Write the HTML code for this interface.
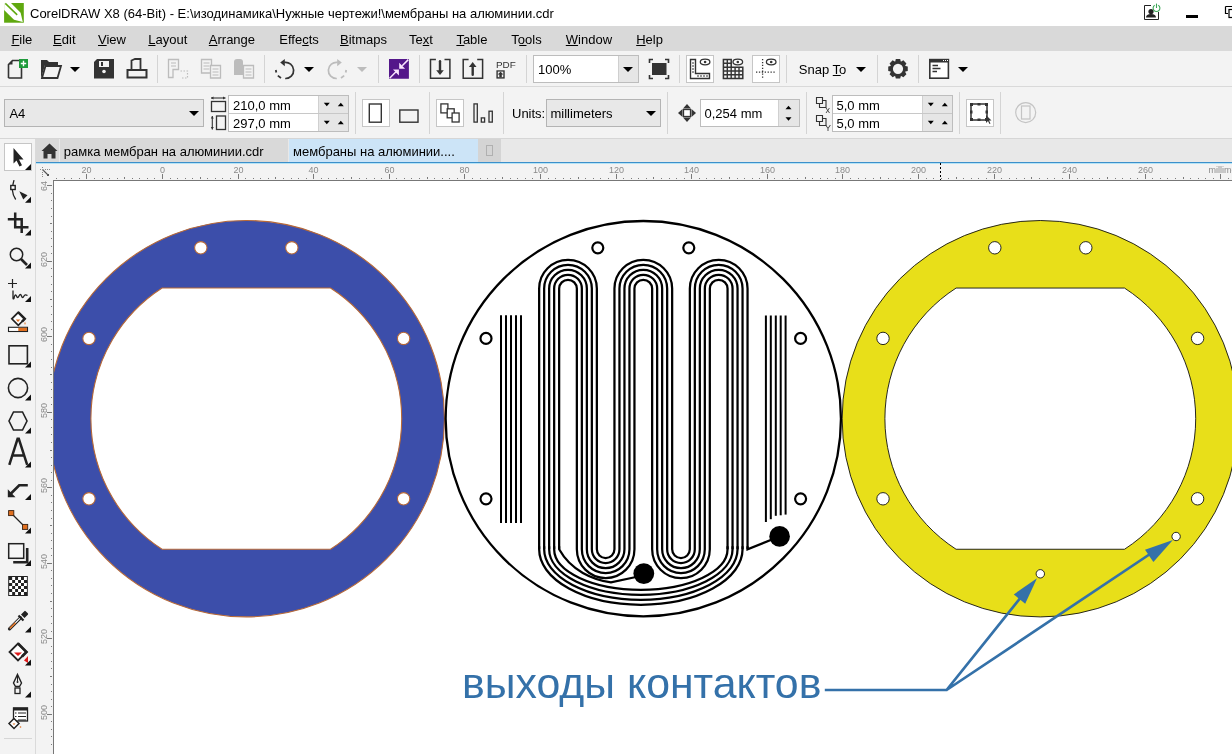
<!DOCTYPE html>
<html><head><meta charset="utf-8">
<style>
html,body{margin:0;padding:0;width:1232px;height:754px;overflow:hidden;background:#f3f3f3;font-family:"Liberation Sans", sans-serif;font-size:13px;color:#000}
body{position:relative}
.a{position:absolute}
svg text{font-family:"Liberation Sans",sans-serif}
svg{will-change:transform}
</style></head><body>
<div class="a" style="left:0px;top:0px;width:1232px;height:26px;background:#ffffff;"></div><div class="a" style="left:0px;top:26px;width:1232px;height:25px;background:#d9d9d9;"></div><div class="a" style="left:0px;top:51px;width:1232px;height:35px;background:#f3f3f3;"></div><div class="a" style="left:0px;top:86px;width:1232px;height:1px;background:#d9d9d9;"></div><div class="a" style="left:0px;top:87px;width:1232px;height:51px;background:#f3f3f3;"></div><div class="a" style="left:0px;top:138px;width:1232px;height:1px;background:#d6d6d6;"></div><div class="a" style="left:36px;top:139px;width:1196px;height:23px;background:#e8e8e8;"></div><div class="a" style="left:36px;top:139px;width:23px;height:23px;background:#d9d9d9;"></div><div class="a" style="left:60px;top:139px;width:228px;height:23px;background:#d9d9d9;"></div><div class="a" style="left:289px;top:139px;width:189px;height:23px;background:#cce4f7;"></div><div class="a" style="left:478px;top:139px;width:23px;height:23px;background:#d4d4d4;"></div><div class="a" style="left:36px;top:162px;width:1196px;height:1px;background:#3b8fca;"></div><div class="a" style="left:36px;top:163px;width:1196px;height:1px;background:#b5e3f6;"></div><div class="a" style="left:36px;top:164px;width:1196px;height:16px;background:#f3f3f3;"></div><div class="a" style="left:36px;top:164px;width:17px;height:590px;background:#f3f3f3;"></div><div class="a" style="left:53px;top:180px;width:1179px;height:574px;background:#fff;border-left:1px solid #777;border-top:1px solid #777;box-sizing:border-box"></div><div class="a" style="left:0px;top:139px;width:35px;height:615px;background:#f3f3f3;"></div><div class="a" style="left:35px;top:139px;width:1px;height:615px;background:#dadada;"></div><div class="a" style="left:533px;top:55px;width:106px;height:28px;background:#fff;border:1px solid #bdbdbd;box-sizing:border-box"></div><div class="a" style="left:618px;top:56px;width:19px;height:26px;background:#e6e6e6;border-left:1px solid #cfcfcf"></div><div class="a" style="left:686px;top:55px;width:28px;height:28px;background:#fff;border:1px solid #c6c6c6;box-sizing:border-box"></div><div class="a" style="left:752px;top:55px;width:28px;height:28px;background:#fff;border:1px solid #c6c6c6;box-sizing:border-box"></div><div class="a" style="left:4px;top:99px;width:200px;height:28px;background:#e8e8e8;border:1px solid #b4b4b4;box-sizing:border-box"></div><div class="a" style="left:228px;top:95px;width:121px;height:37px;background:#fff;border:1px solid #bdbdbd;box-sizing:border-box"></div><div class="a" style="left:318px;top:96px;width:29px;height:35px;background:#e6e6e6;border-left:1px solid #d0d0d0"></div><div class="a" style="left:229px;top:113px;width:119px;height:1px;background:#c8c8c8;"></div><div class="a" style="left:362px;top:99px;width:28px;height:28px;background:#fff;border:1px solid #c6c6c6;box-sizing:border-box"></div><div class="a" style="left:436px;top:99px;width:28px;height:28px;background:#fff;border:1px solid #c6c6c6;box-sizing:border-box"></div><div class="a" style="left:546px;top:99px;width:115px;height:28px;background:#e8e8e8;border:1px solid #b4b4b4;box-sizing:border-box"></div><div class="a" style="left:700px;top:99px;width:100px;height:28px;background:#fff;border:1px solid #bdbdbd;box-sizing:border-box"></div><div class="a" style="left:778px;top:100px;width:20px;height:26px;background:#e6e6e6;border-left:1px solid #d0d0d0"></div><div class="a" style="left:832px;top:95px;width:121px;height:37px;background:#fff;border:1px solid #bdbdbd;box-sizing:border-box"></div><div class="a" style="left:922px;top:96px;width:29px;height:35px;background:#e6e6e6;border-left:1px solid #d0d0d0"></div><div class="a" style="left:833px;top:113px;width:119px;height:1px;background:#c8c8c8;"></div><div class="a" style="left:966px;top:99px;width:28px;height:28px;background:#fff;border:1px solid #c6c6c6;box-sizing:border-box"></div><div class="a" style="left:4px;top:143px;width:28px;height:28px;background:#fff;border:1px solid #c6c6c6;box-sizing:border-box"></div>
<svg class="a" style="left:0;top:0" width="1232" height="754" viewBox="0 0 1232 754"><defs><clipPath id="cv"><rect x="54" y="181" width="1178" height="573"/></clipPath></defs><g clip-path="url(#cv)"><path d="M48.15,418.65a198.15,198.15 0 1,0 396.30,0a198.15,198.15 0 1,0 -396.30,0zM162.08,288.05L330.52,288.05A155.4,155.4 0 0,1 330.52,549.25L162.08,549.25A155.4,155.4 0 0,1 162.08,288.05zM194.60,247.80a6.2,6.2 0 1,0 12.40,0a6.2,6.2 0 1,0 -12.40,0zM285.60,247.80a6.2,6.2 0 1,0 12.40,0a6.2,6.2 0 1,0 -12.40,0zM82.80,338.40a6.2,6.2 0 1,0 12.40,0a6.2,6.2 0 1,0 -12.40,0zM397.40,338.40a6.2,6.2 0 1,0 12.40,0a6.2,6.2 0 1,0 -12.40,0zM82.80,498.80a6.2,6.2 0 1,0 12.40,0a6.2,6.2 0 1,0 -12.40,0zM397.40,498.80a6.2,6.2 0 1,0 12.40,0a6.2,6.2 0 1,0 -12.40,0z" fill="#3c4eaa" fill-rule="evenodd" stroke="#b86a38" stroke-width="1.1"/><path d="M842.15,418.65a198.15,198.15 0 1,0 396.30,0a198.15,198.15 0 1,0 -396.30,0zM956.08,288.05L1124.52,288.05A155.4,155.4 0 0,1 1124.52,549.25L956.08,549.25A155.4,155.4 0 0,1 956.08,288.05zM988.60,247.80a6.2,6.2 0 1,0 12.40,0a6.2,6.2 0 1,0 -12.40,0zM1079.60,247.80a6.2,6.2 0 1,0 12.40,0a6.2,6.2 0 1,0 -12.40,0zM876.80,338.40a6.2,6.2 0 1,0 12.40,0a6.2,6.2 0 1,0 -12.40,0zM1191.40,338.40a6.2,6.2 0 1,0 12.40,0a6.2,6.2 0 1,0 -12.40,0zM876.80,498.80a6.2,6.2 0 1,0 12.40,0a6.2,6.2 0 1,0 -12.40,0zM1191.40,498.80a6.2,6.2 0 1,0 12.40,0a6.2,6.2 0 1,0 -12.40,0zM1036.10,573.80a4.2,4.2 0 1,0 8.40,0a4.2,4.2 0 1,0 -8.40,0zM1171.90,536.50a4.2,4.2 0 1,0 8.40,0a4.2,4.2 0 1,0 -8.40,0z" fill="#e8df19" fill-rule="evenodd" stroke="#111" stroke-width="0.9"/><circle cx="643.3" cy="418.65" r="197.65" fill="none" stroke="#000" stroke-width="2.3"/><circle cx="597.80" cy="247.80" r="5.5" fill="none" stroke="#000" stroke-width="2.2"/><circle cx="688.80" cy="247.80" r="5.5" fill="none" stroke="#000" stroke-width="2.2"/><circle cx="486.00" cy="338.40" r="5.5" fill="none" stroke="#000" stroke-width="2.2"/><circle cx="800.60" cy="338.40" r="5.5" fill="none" stroke="#000" stroke-width="2.2"/><circle cx="486.00" cy="498.80" r="5.5" fill="none" stroke="#000" stroke-width="2.2"/><circle cx="800.60" cy="498.80" r="5.5" fill="none" stroke="#000" stroke-width="2.2"/><line x1="501" y1="315.3" x2="501" y2="523" stroke="#000" stroke-width="2"/><line x1="506" y1="315.3" x2="506" y2="523" stroke="#000" stroke-width="2"/><line x1="511" y1="315.3" x2="511" y2="523" stroke="#000" stroke-width="2"/><line x1="516" y1="315.3" x2="516" y2="523" stroke="#000" stroke-width="2"/><line x1="521" y1="315.3" x2="521" y2="523" stroke="#000" stroke-width="2"/><line x1="765.9" y1="315.5" x2="765.9" y2="522" stroke="#000" stroke-width="2"/><line x1="770.8" y1="315.5" x2="770.8" y2="519.2" stroke="#000" stroke-width="2"/><line x1="775.8" y1="315.5" x2="775.8" y2="515.8" stroke="#000" stroke-width="2"/><line x1="780.7" y1="315.5" x2="780.7" y2="515.3" stroke="#000" stroke-width="2"/><line x1="785.6" y1="315.5" x2="785.6" y2="514.6" stroke="#000" stroke-width="2"/><path d="M559.15,549.30L559.15,288.60A8.85,8.85 0 0,1 576.85,288.60L576.85,549.30A28.80,28.80 0 0,0 634.45,549.30L634.45,288.60A8.85,8.85 0 0,1 652.15,288.60L652.15,549.30A28.80,28.80 0 0,0 709.80,549.30L709.85,288.60A8.85,8.85 0 0,1 727.55,288.60L727.55,549.30" fill="none" stroke="#000" stroke-width="2.25"/><path d="M554.15,549.30L554.15,288.60A13.85,13.85 0 0,1 581.85,288.60L581.85,549.30A23.80,23.80 0 0,0 629.45,549.30L629.45,288.60A13.85,13.85 0 0,1 657.15,288.60L657.15,549.30A23.80,23.80 0 0,0 704.80,549.30L704.85,288.60A13.85,13.85 0 0,1 732.55,288.60L732.55,549.30" fill="none" stroke="#000" stroke-width="2.25"/><path d="M549.15,549.30L549.15,288.60A18.85,18.85 0 0,1 586.85,288.60L586.85,549.30A18.80,18.80 0 0,0 624.45,549.30L624.45,288.60A18.85,18.85 0 0,1 662.15,288.60L662.15,549.30A18.80,18.80 0 0,0 699.80,549.30L699.85,288.60A18.85,18.85 0 0,1 737.55,288.60L737.55,549.30" fill="none" stroke="#000" stroke-width="2.25"/><path d="M544.15,549.30L544.15,288.60A23.85,23.85 0 0,1 591.85,288.60L591.85,549.30A13.80,13.80 0 0,0 619.45,549.30L619.45,288.60A23.85,23.85 0 0,1 667.15,288.60L667.15,549.30A13.80,13.80 0 0,0 694.80,549.30L694.85,288.60A23.85,23.85 0 0,1 742.55,288.60L742.55,549.30" fill="none" stroke="#000" stroke-width="2.25"/><path d="M539.15,549.30L539.15,288.60A28.85,28.85 0 0,1 596.85,288.60L596.85,549.30A8.80,8.80 0 0,0 614.45,549.30L614.45,288.60A28.85,28.85 0 0,1 672.15,288.60L672.15,549.30A8.80,8.80 0 0,0 689.80,549.30L689.85,288.60A28.85,28.85 0 0,1 747.55,288.60L747.55,549.30" fill="none" stroke="#000" stroke-width="2.25"/><path d="M554.15,546.30L554.15,549.30A86.70,40.50 0 0,0 727.55,549.30L727.55,546.30" fill="none" stroke="#000" stroke-width="2.25"/><path d="M549.15,546.30L549.15,549.30A91.70,45.50 0 0,0 732.55,549.30L732.55,546.30" fill="none" stroke="#000" stroke-width="2.25"/><path d="M544.15,546.30L544.15,549.30A96.70,50.50 0 0,0 737.55,549.30L737.55,546.30" fill="none" stroke="#000" stroke-width="2.25"/><path d="M539.15,546.30L539.15,549.30A101.70,55.50 0 0,0 742.55,549.30L742.55,546.30" fill="none" stroke="#000" stroke-width="2.25"/><path d="M559.15,546.30L559.15,549.30C571.15,570.9 593,579.7 611,582.4L636,577" fill="none" stroke="#000" stroke-width="2.25"/><path d="M747.55,546.30L747.55,549.30L772,539.5" fill="none" stroke="#000" stroke-width="2.25"/><circle cx="643.8" cy="573.6" r="10.4" fill="#000"/><circle cx="779.6" cy="536.4" r="10.3" fill="#000"/><path d="M824.8,690L946.6,690L1030,586M946.6,690L1162,546" fill="none" stroke="#3471a9" stroke-width="2.7" stroke-linejoin="miter"/><path d="M1037,578.2L1013.8,594.4L1025.2,603.8z" fill="#3471a9"/><path d="M1172.9,540L1145,549.8L1153.4,562z" fill="#3471a9"/><text x="462" y="697.9" font-family="Liberation Sans" font-size="43" fill="#3471a9" textLength="359.4" lengthAdjust="spacingAndGlyphs">выходы контактов</text></g></svg>
<svg class="a" style="left:0;top:0" width="1232" height="754" viewBox="0 0 1232 754" font-family="Liberation Sans, sans-serif"><rect x="4.1" y="3" width="19.7" height="19.7" fill="#5fa80f"/><path d="M4.1,3 L11,3 L20.6,12.8 L22.8,21.9 L14,19.8 L4.1,9.9 Z" fill="#fff"/><path d="M5.3,3.4 L17.2,14.9" stroke="#5fa80f" stroke-width="1.5"/><text x="30" y="18" font-size="13" fill="#000" text-anchor="start" >CorelDRAW X8 (64-Bit) - E:\изодинамика\Нужные чертежи!\мембраны на алюминии.cdr</text><path d="M1144.5,19.5 L1144.5,5.5 L1151,5.5 M1158.5,12 L1158.5,19.5 L1144.5,19.5" fill="none" stroke="#222" stroke-width="1"/><circle cx="1151" cy="11.5" r="2.6" fill="#222"/><path d="M1146,17.5 Q1146,14 1151,14 Q1156,14 1156,17.5 Z" fill="#222"/><path d="M1158.3,5.2 A3.4,3.4 0 1,1 1154.7,5.2" fill="none" stroke="#3aa655" stroke-width="1.1"/><line x1="1156.5" y1="3.6" x2="1156.5" y2="8" stroke="#3aa655" stroke-width="1.1"/><rect x="1186" y="15" width="12" height="3" fill="#000"/><path d="M1225.5,6.5 L1232,6.5 M1225.5,6.5 L1225.5,13.5 L1228,13.5" fill="none" stroke="#000" stroke-width="1.2"/><rect x="1229" y="9.5" width="6" height="8" fill="none" stroke="#000" stroke-width="1.2"/><text x="11.4" y="44" font-size="13" fill="#000" text-anchor="start" >File</text><text x="53.1" y="44" font-size="13" fill="#000" text-anchor="start" >Edit</text><text x="98" y="44" font-size="13" fill="#000" text-anchor="start" >View</text><text x="148.3" y="44" font-size="13" fill="#000" text-anchor="start" >Layout</text><text x="208.8" y="44" font-size="13" fill="#000" text-anchor="start" >Arrange</text><text x="279.3" y="44" font-size="13" fill="#000" text-anchor="start" >Effects</text><text x="340" y="44" font-size="13" fill="#000" text-anchor="start" >Bitmaps</text><text x="409" y="44" font-size="13" fill="#000" text-anchor="start" >Text</text><text x="456.4" y="44" font-size="13" fill="#000" text-anchor="start" >Table</text><text x="511.3" y="44" font-size="13" fill="#000" text-anchor="start" >Tools</text><text x="565.8" y="44" font-size="13" fill="#000" text-anchor="start" >Window</text><text x="636.2" y="44" font-size="13" fill="#000" text-anchor="start" >Help</text><rect x="11.40" y="45" width="7.94" height="1" fill="#000"/><rect x="53.10" y="45" width="8.67" height="1" fill="#000"/><rect x="98.00" y="45" width="8.67" height="1" fill="#000"/><rect x="148.30" y="45" width="7.23" height="1" fill="#000"/><rect x="208.80" y="45" width="8.67" height="1" fill="#000"/><rect x="302.19" y="45" width="6.50" height="1" fill="#000"/><rect x="340.00" y="45" width="8.67" height="1" fill="#000"/><rect x="422.73" y="45" width="6.50" height="1" fill="#000"/><rect x="456.40" y="45" width="7.94" height="1" fill="#000"/><rect x="519.24" y="45" width="7.23" height="1" fill="#000"/><rect x="565.80" y="45" width="12.27" height="1" fill="#000"/><rect x="636.20" y="45" width="9.39" height="1" fill="#000"/><path d="M8.5,78 L8.5,64.5 L12.5,60.5 L19.5,60.5 M21.5,67 L21.5,78 L8.5,78" fill="none" stroke="#333" stroke-width="1.6"/><path d="M8.5,64.5 L12.5,64.5 L12.5,60.5 Z" fill="#333"/><rect x="19" y="59" width="9" height="9" fill="#1f9a3b"/><path d="M23.5,60.8 V66.2 M20.8,63.5 H26.2" stroke="#fff" stroke-width="1.4"/><path d="M41,78.5 L41,60 L47,60 L49,62 L58,62 L58,65 L45,65 L41,78.5 Z" fill="#333"/><path d="M42,78 L45.5,66 L61,66 L57.5,78 Z" fill="none" stroke="#333" stroke-width="1.8"/><path d="M70.0,67.0 L80.0,67.0 L75,72.0 Z" fill="#000"/><path d="M94,78.6 L94,62 L97,59 L114,59 L114,78.6 Z" fill="#333"/><rect x="99" y="61" width="10" height="6" fill="#f3f3f3"/><rect x="101" y="62" width="2" height="4" fill="#333"/><circle cx="104" cy="71.5" r="1.8" fill="#f3f3f3"/><path d="M131.5,70 L131.5,60.5 L135,59 L140.5,59 L140.5,70" fill="none" stroke="#333" stroke-width="1.8"/><path d="M127.5,70 L146.5,70 L146.5,77.5 L127.5,77.5 Z" fill="none" stroke="#333" stroke-width="2"/><rect x="127" y="69" width="20" height="2" fill="#333"/><rect x="157" y="55" width="1" height="28" fill="#d4d4d4"/><path d="M168.5,59.5 H178.5 V69.5 H173 V77.5 H168.5 Z" fill="none" stroke="#bcbcbc" stroke-width="1.3"/><path d="M171,63 H176 M171,66 H176" stroke="#bcbcbc" stroke-width="1.2"/><path d="M180.5,71 H187.5 V78 H180.5" fill="none" stroke="#bcbcbc" stroke-width="1.2" stroke-dasharray="1.5,1.5"/><path d="M201.5,59.5 H211.5 V73 H201.5 Z" fill="#f3f3f3" stroke="#bcbcbc" stroke-width="1.3"/><path d="M203.5,63 H209.5 M203.5,66 H209.5 M203.5,69 H209.5" stroke="#bcbcbc" stroke-width="1.2"/><path d="M210.5,65.5 H220.5 V78 H210.5 Z" fill="#f3f3f3" stroke="#bcbcbc" stroke-width="1.3"/><path d="M212.5,69 H218.5 M212.5,72 H218.5 M212.5,75 H218.5" stroke="#bcbcbc" stroke-width="1.2"/><path d="M234,62 Q234,59 237,59 L240,59 Q243,59 243,62 V75 H234 Z" fill="#bcbcbc"/><path d="M243.5,65.5 H253.5 V78 H243.5 Z" fill="#f3f3f3" stroke="#bcbcbc" stroke-width="1.3"/><path d="M245.5,69 H251.5 M245.5,72 H251.5 M245.5,75 H251.5" stroke="#bcbcbc" stroke-width="1.2"/><rect x="264" y="55" width="1" height="28" fill="#d4d4d4"/><path d="M284.3,62.4 A8.1,8.1 0 1,1 285.2,78.5" fill="none" stroke="#333" stroke-width="1.7"/><path d="M281,78 L277.8,75.6" stroke="#333" stroke-width="1.7"/><path d="M275.8,70 L276.3,72.5" stroke="#333" stroke-width="1.8"/><path d="M280.2,62.6 L284.8,58.9 L284.8,66.3 Z" fill="#333"/><path d="M304.0,67.0 L314.0,67.0 L309,72.0 Z" fill="#000"/><path d="M337.7,62.4 A8.1,8.1 0 1,0 336.8,78.5" fill="none" stroke="#bcbcbc" stroke-width="1.7"/><path d="M341,78 L344.2,75.6" stroke="#bcbcbc" stroke-width="1.7"/><path d="M346.2,70 L345.7,72.5" stroke="#bcbcbc" stroke-width="1.8"/><path d="M341.8,62.6 L337.2,58.9 L337.2,66.3 Z" fill="#bcbcbc"/><path d="M357.0,67.0 L367.0,67.0 L362,72.0 Z" fill="#bcbcbc"/><rect x="378" y="55" width="1" height="28" fill="#d4d4d4"/><rect x="389" y="59" width="19.9" height="19.75" fill="#54178a"/><path d="M389.6,78.2 L396,71.8 M408.3,59.6 L402.2,65.7" stroke="#fbe6ff" stroke-width="1.5"/><path d="M399.2,62.8 L399.2,68.7 L405.1,68.7 Z M393,69.5 L398.9,69.5 L398.9,75.4 Z" fill="#fbe6ff"/><rect x="419" y="55" width="1" height="28" fill="#d4d4d4"/><path d="M435.9,59.5 H430.5 V78.2 H449.9 V59.5 H444.5" fill="none" stroke="#333" stroke-width="1.5"/><path d="M440.0,61.3 V71" stroke="#333" stroke-width="2.4" stroke-linecap="round"/><path d="M436.2,70.2 H443.8 L440.0,75 Z" fill="#333"/><path d="M468.59999999999997,59.5 H463.2 V78.2 H482.59999999999997 V59.5 H477.2" fill="none" stroke="#333" stroke-width="1.5"/><path d="M472.7,66 V74.8" stroke="#333" stroke-width="2.4" stroke-linecap="round"/><path d="M468.9,66.9 H476.5 L472.7,62 Z" fill="#333"/><text x="496" y="67.5" font-size="9.8" fill="#333" text-anchor="start" textLength="19.8" lengthAdjust="spacingAndGlyphs">PDF</text><rect x="496.4" y="70.3" width="8.3" height="8.3" fill="#333"/><rect x="497.8" y="71.6" width="5.5" height="5.6" fill="#f3f3f3"/><path d="M497.6,74.6 L500.55,71.8 L503.5,74.6 Z M499.3,74.5 H501.8 V77.3 H499.3 Z" fill="#333"/><rect x="526" y="55" width="1" height="28" fill="#d4d4d4"/><text x="538" y="74" font-size="13" fill="#000" text-anchor="start" >100%</text><path d="M623.0,67.0 L633.0,67.0 L628,72.0 Z" fill="#000"/><path d="M649.5,63 V59.5 H653 M665,59.5 H668.5 V63 M668.5,75 V78.5 H665 M653,78.5 H649.5 V75" fill="none" stroke="#333" stroke-width="1.6"/><rect x="652" y="63" width="14.5" height="12" fill="#333"/><rect x="679" y="55" width="1" height="28" fill="#d4d4d4"/><path d="M690.5,59.5 V78.5 H709.5 V73.5 H695.5 V59.5 Z" fill="none" stroke="#333" stroke-width="1.4"/><path d="M692,63 H694 M692,66 H694 M692,69 H694 M692,72 H694 M698,77 V75 M701,77 V75 M704,77 V75 M707,77 V75" stroke="#333" stroke-width="1"/><ellipse cx="705.1" cy="62" rx="4.8" ry="2.8" fill="#fff" stroke="#333" stroke-width="1.3"/><circle cx="705.1" cy="62" r="1.3" fill="#333"/><path d="M723.4,59.6 H731.2 V67.3 H742.8 V78.4 H723.4 Z" fill="none" stroke="#333" stroke-width="1.5"/><path d="M727.3,59 V79 M731.2,67 V79 M735.1,67 V79 M739,67 V79 M723,63.3 H731.5 M723,67.2 H731.5 M723,71 H743 M723,74.8 H743" stroke="#333" stroke-width="1.4"/><ellipse cx="737.8" cy="62" rx="4.8" ry="2.8" fill="#fff" stroke="#333" stroke-width="1.3"/><circle cx="737.8" cy="62" r="1.3" fill="#333"/><path d="M762.6,59 V79" stroke="#333" stroke-width="1.3" stroke-dasharray="1.3,1.6"/><path d="M756,72.2 H776" stroke="#333" stroke-width="1.3" stroke-dasharray="1.3,1.6"/><ellipse cx="771.2" cy="62" rx="4.8" ry="2.8" fill="#fff" stroke="#333" stroke-width="1.3"/><circle cx="771.2" cy="62" r="1.3" fill="#333"/><rect x="786" y="55" width="1" height="28" fill="#d4d4d4"/><text x="798.8" y="74" font-size="13" fill="#000" text-anchor="start" >Snap To</text><rect x="832.77" y="75" width="7.94" height="1" fill="#000"/><path d="M856.0,67.0 L866.0,67.0 L861,72.0 Z" fill="#000"/><rect x="877" y="55" width="1" height="28" fill="#d4d4d4"/><path d="M907.76,66.62 L907.76,70.98 L905.39,71.58 L905.20,72.06 L906.44,74.16 L903.36,77.24 L901.26,76.00 L900.78,76.19 L900.18,78.56 L895.82,78.56 L895.22,76.19 L894.74,76.00 L892.64,77.24 L889.56,74.16 L890.80,72.06 L890.61,71.58 L888.24,70.98 L888.24,66.62 L890.61,66.02 L890.80,65.54 L889.56,63.44 L892.64,60.36 L894.74,61.60 L895.22,61.41 L895.82,59.04 L900.18,59.04 L900.78,61.41 L901.26,61.60 L903.36,60.36 L906.44,63.44 L905.20,65.54 L905.39,66.02 Z M903.1,68.8 A5.1,5.1 0 1,0 892.9,68.8 A5.1,5.1 0 1,0 903.1,68.8 Z" fill="#333" fill-rule="evenodd"/><rect x="918" y="55" width="1" height="28" fill="#d4d4d4"/><rect x="929.8" y="59.6" width="18.6" height="18.6" fill="#fff" stroke="#333" stroke-width="1.6"/><rect x="929" y="59" width="20" height="3.5" fill="#333"/><rect x="943" y="60" width="1" height="1" fill="#fff"/><rect x="945" y="60" width="1" height="1" fill="#fff"/><rect x="947" y="60" width="1" height="1" fill="#fff"/><path d="M932.5,65.5 H938 M932.5,68.5 H940.5 M932.5,71.5 H937" stroke="#333" stroke-width="1.3"/><path d="M958.0,67.0 L968.0,67.0 L963,72.0 Z" fill="#000"/><text x="9.4" y="117.6" font-size="13" fill="#000" text-anchor="start" >A4</text><path d="M189.0,111.1 L199.0,111.1 L194,116.1 Z" fill="#000"/><path d="M211,98 H225.5" stroke="#333" stroke-width="1.1"/><path d="M211,98 L213.5,96.5 V99.5 Z M225.5,98 L223,96.5 V99.5 Z" fill="#333"/><rect x="211.5" y="101.5" width="14" height="10" fill="none" stroke="#333" stroke-width="1.3"/><path d="M212.3,116 V129.5" stroke="#333" stroke-width="1.1"/><path d="M212.3,116 L210.8,118.5 H213.8 Z M212.3,129.5 L210.8,127 H213.8 Z" fill="#333"/><rect x="216.5" y="116" width="9" height="13.5" fill="none" stroke="#333" stroke-width="1.3"/><text x="233" y="110" font-size="13" fill="#000" text-anchor="start" >210,0 mm</text><text x="233" y="128" font-size="13" fill="#000" text-anchor="start" >297,0 mm</text><path d="M323.8,102.75 L329.8,102.75 L326.8,106.25 Z" fill="#000"/><path d="M337.8,106.25 L343.8,106.25 L340.8,102.75 Z" fill="#000"/><path d="M323.8,120.75 L329.8,120.75 L326.8,124.25 Z" fill="#000"/><path d="M337.8,124.25 L343.8,124.25 L340.8,120.75 Z" fill="#000"/><rect x="355" y="92" width="1" height="42" fill="#d4d4d4"/><rect x="369.3" y="104" width="12" height="18.2" fill="none" stroke="#333" stroke-width="1.4"/><rect x="399.8" y="110" width="18.2" height="12.2" fill="none" stroke="#333" stroke-width="1.4"/><rect x="429" y="92" width="1" height="42" fill="#d4d4d4"/><rect x="440.9" y="103.9" width="7" height="9" fill="#fff" stroke="#333" stroke-width="1.3"/><rect x="447.2" y="108.8" width="7" height="9" fill="#fff" stroke="#333" stroke-width="1.3"/><rect x="452.1" y="113" width="7" height="9" fill="#fff" stroke="#333" stroke-width="1.3"/><rect x="474" y="103.9" width="3.3" height="18.2" fill="#f3f3f3" stroke="#333" stroke-width="1.3"/><rect x="481.3" y="117.9" width="3.3" height="4.2" fill="#f3f3f3" stroke="#333" stroke-width="1.3"/><rect x="489" y="111.2" width="3.3" height="10.9" fill="#f3f3f3" stroke="#333" stroke-width="1.3"/><rect x="503" y="92" width="1" height="42" fill="#d4d4d4"/><text x="512" y="117.6" font-size="13" fill="#000" text-anchor="start" >Units:</text><text x="550.5" y="117.6" font-size="13" fill="#000" text-anchor="start" >millimeters</text><path d="M646.0,111.1 L656.0,111.1 L651,116.1 Z" fill="#000"/><rect x="667" y="92" width="1" height="42" fill="#d4d4d4"/><path d="M687,104 L691,108.5 H683 Z M687,122 L691,117.5 H683 Z M678,113 L682.5,109 V117 Z M696,113 L691.5,109 V117 Z" fill="#333"/><rect x="683.5" y="109.5" width="7" height="7" fill="#fff" stroke="#333" stroke-width="1.3"/><text x="704.5" y="117.6" font-size="13" fill="#000" text-anchor="start" >0,254 mm</text><path d="M785.5,109.25 L791.5,109.25 L788.5,105.75 Z" fill="#000"/><path d="M785.5,117.25 L791.5,117.25 L788.5,120.75 Z" fill="#000"/><rect x="806" y="92" width="1" height="42" fill="#d4d4d4"/><path d="M816.5,97.5 H822.5 V103.5 H816.5 Z" fill="none" stroke="#333" stroke-width="1.1"/><path d="M822.5,100.5 H826 V107.5 H819.5 V103.5" fill="none" stroke="#333" stroke-width="1.1"/><path d="M816.5,115.5 H822.5 V121.5 H816.5 Z" fill="none" stroke="#333" stroke-width="1.1"/><path d="M822.5,118.5 H826 V125.5 H819.5 V121.5" fill="none" stroke="#333" stroke-width="1.1"/><text x="825.5" y="112.5" font-size="9" fill="#333" text-anchor="start" >x</text><text x="825" y="130.5" font-size="9" fill="#333" text-anchor="start" >Y</text><text x="836.5" y="110" font-size="13" fill="#000" text-anchor="start" >5,0 mm</text><text x="836.5" y="128" font-size="13" fill="#000" text-anchor="start" >5,0 mm</text><path d="M927.8,102.75 L933.8,102.75 L930.8,106.25 Z" fill="#000"/><path d="M941.8,106.25 L947.8,106.25 L944.8,102.75 Z" fill="#000"/><path d="M927.8,120.75 L933.8,120.75 L930.8,124.25 Z" fill="#000"/><path d="M941.8,124.25 L947.8,124.25 L944.8,120.75 Z" fill="#000"/><rect x="959" y="92" width="1" height="42" fill="#d4d4d4"/><rect x="971" y="104" width="16" height="16" fill="none" stroke="#333" stroke-width="1.5"/><path d="M970,103 h3 v3 h-3z M985,103 h3 v3 h-3z M970,118 h3 v3 h-3z M985,118 h3 v3 h-3z M977.5,103 h3 v2.5 h-3z M977.5,118.5 h3 v2.5 h-3z M970,110.5 h2.5 v3 h-2.5z M985.5,110.5 h2.5 v3 h-2.5z" fill="#333"/><path d="M986,115 L986,123 L988,121 L989.5,124 L990.5,123.5 L989,120.5 L991.5,120.5 Z" fill="#333"/><rect x="1000" y="92" width="1" height="42" fill="#d4d4d4"/><circle cx="1025.7" cy="112.6" r="10" fill="none" stroke="#c4c4c4" stroke-width="1.2"/><rect x="1021.5" y="106" width="8.5" height="13" fill="none" stroke="#c4c4c4" stroke-width="1.2"/><path d="M49.5,143.5 L57.5,151 L55.5,151 L55.5,158.5 L51.5,158.5 L51.5,154 L47.5,154 L47.5,158.5 L43.5,158.5 L43.5,151 L41.5,151 Z" fill="#333"/><text x="63.8" y="155.5" font-size="13" fill="#000" text-anchor="start" >рамка мембран на алюминии.cdr</text><text x="293" y="155.5" font-size="13" fill="#000" text-anchor="start" >мембраны на алюминии....</text><rect x="486.5" y="145.5" width="6" height="10" fill="none" stroke="#b0b0b0" stroke-width="1"/><rect x="56" y="178" width="1" height="1" fill="#7a7a7a"/><rect x="64" y="178" width="1" height="1" fill="#7a7a7a"/><rect x="71" y="178" width="1" height="1" fill="#7a7a7a"/><rect x="79" y="178" width="1" height="1" fill="#7a7a7a"/><rect x="86" y="174" width="1" height="5" fill="#7a7a7a"/><text x="86.50" y="172.7" font-size="9" fill="#8a8a8a" text-anchor="middle" >20</text><rect x="94" y="178" width="1" height="1" fill="#7a7a7a"/><rect x="102" y="178" width="1" height="1" fill="#7a7a7a"/><rect x="109" y="178" width="1" height="1" fill="#7a7a7a"/><rect x="117" y="178" width="1" height="1" fill="#7a7a7a"/><rect x="124" y="177" width="1" height="2" fill="#7a7a7a"/><rect x="132" y="178" width="1" height="1" fill="#7a7a7a"/><rect x="139" y="178" width="1" height="1" fill="#7a7a7a"/><rect x="147" y="178" width="1" height="1" fill="#7a7a7a"/><rect x="154" y="178" width="1" height="1" fill="#7a7a7a"/><rect x="162" y="174" width="1" height="5" fill="#7a7a7a"/><text x="162.50" y="172.7" font-size="9" fill="#8a8a8a" text-anchor="middle" >0</text><rect x="170" y="178" width="1" height="1" fill="#7a7a7a"/><rect x="177" y="178" width="1" height="1" fill="#7a7a7a"/><rect x="185" y="178" width="1" height="1" fill="#7a7a7a"/><rect x="192" y="178" width="1" height="1" fill="#7a7a7a"/><rect x="200" y="177" width="1" height="2" fill="#7a7a7a"/><rect x="207" y="178" width="1" height="1" fill="#7a7a7a"/><rect x="215" y="178" width="1" height="1" fill="#7a7a7a"/><rect x="222" y="178" width="1" height="1" fill="#7a7a7a"/><rect x="230" y="178" width="1" height="1" fill="#7a7a7a"/><rect x="238" y="174" width="1" height="5" fill="#7a7a7a"/><text x="238.50" y="172.7" font-size="9" fill="#8a8a8a" text-anchor="middle" >20</text><rect x="245" y="178" width="1" height="1" fill="#7a7a7a"/><rect x="253" y="178" width="1" height="1" fill="#7a7a7a"/><rect x="260" y="178" width="1" height="1" fill="#7a7a7a"/><rect x="268" y="178" width="1" height="1" fill="#7a7a7a"/><rect x="275" y="177" width="1" height="2" fill="#7a7a7a"/><rect x="283" y="178" width="1" height="1" fill="#7a7a7a"/><rect x="291" y="178" width="1" height="1" fill="#7a7a7a"/><rect x="298" y="178" width="1" height="1" fill="#7a7a7a"/><rect x="306" y="178" width="1" height="1" fill="#7a7a7a"/><rect x="313" y="174" width="1" height="5" fill="#7a7a7a"/><text x="313.50" y="172.7" font-size="9" fill="#8a8a8a" text-anchor="middle" >40</text><rect x="321" y="178" width="1" height="1" fill="#7a7a7a"/><rect x="328" y="178" width="1" height="1" fill="#7a7a7a"/><rect x="336" y="178" width="1" height="1" fill="#7a7a7a"/><rect x="343" y="178" width="1" height="1" fill="#7a7a7a"/><rect x="351" y="177" width="1" height="2" fill="#7a7a7a"/><rect x="359" y="178" width="1" height="1" fill="#7a7a7a"/><rect x="366" y="178" width="1" height="1" fill="#7a7a7a"/><rect x="374" y="178" width="1" height="1" fill="#7a7a7a"/><rect x="381" y="178" width="1" height="1" fill="#7a7a7a"/><rect x="389" y="174" width="1" height="5" fill="#7a7a7a"/><text x="389.50" y="172.7" font-size="9" fill="#8a8a8a" text-anchor="middle" >60</text><rect x="396" y="178" width="1" height="1" fill="#7a7a7a"/><rect x="404" y="178" width="1" height="1" fill="#7a7a7a"/><rect x="411" y="178" width="1" height="1" fill="#7a7a7a"/><rect x="419" y="178" width="1" height="1" fill="#7a7a7a"/><rect x="427" y="177" width="1" height="2" fill="#7a7a7a"/><rect x="434" y="178" width="1" height="1" fill="#7a7a7a"/><rect x="442" y="178" width="1" height="1" fill="#7a7a7a"/><rect x="449" y="178" width="1" height="1" fill="#7a7a7a"/><rect x="457" y="178" width="1" height="1" fill="#7a7a7a"/><rect x="464" y="174" width="1" height="5" fill="#7a7a7a"/><text x="464.50" y="172.7" font-size="9" fill="#8a8a8a" text-anchor="middle" >80</text><rect x="472" y="178" width="1" height="1" fill="#7a7a7a"/><rect x="480" y="178" width="1" height="1" fill="#7a7a7a"/><rect x="487" y="178" width="1" height="1" fill="#7a7a7a"/><rect x="495" y="178" width="1" height="1" fill="#7a7a7a"/><rect x="502" y="177" width="1" height="2" fill="#7a7a7a"/><rect x="510" y="178" width="1" height="1" fill="#7a7a7a"/><rect x="517" y="178" width="1" height="1" fill="#7a7a7a"/><rect x="525" y="178" width="1" height="1" fill="#7a7a7a"/><rect x="532" y="178" width="1" height="1" fill="#7a7a7a"/><rect x="540" y="174" width="1" height="5" fill="#7a7a7a"/><text x="540.50" y="172.7" font-size="9" fill="#8a8a8a" text-anchor="middle" >100</text><rect x="548" y="178" width="1" height="1" fill="#7a7a7a"/><rect x="555" y="178" width="1" height="1" fill="#7a7a7a"/><rect x="563" y="178" width="1" height="1" fill="#7a7a7a"/><rect x="570" y="178" width="1" height="1" fill="#7a7a7a"/><rect x="578" y="177" width="1" height="2" fill="#7a7a7a"/><rect x="585" y="178" width="1" height="1" fill="#7a7a7a"/><rect x="593" y="178" width="1" height="1" fill="#7a7a7a"/><rect x="600" y="178" width="1" height="1" fill="#7a7a7a"/><rect x="608" y="178" width="1" height="1" fill="#7a7a7a"/><rect x="616" y="174" width="1" height="5" fill="#7a7a7a"/><text x="616.50" y="172.7" font-size="9" fill="#8a8a8a" text-anchor="middle" >120</text><rect x="623" y="178" width="1" height="1" fill="#7a7a7a"/><rect x="631" y="178" width="1" height="1" fill="#7a7a7a"/><rect x="638" y="178" width="1" height="1" fill="#7a7a7a"/><rect x="646" y="178" width="1" height="1" fill="#7a7a7a"/><rect x="653" y="177" width="1" height="2" fill="#7a7a7a"/><rect x="661" y="178" width="1" height="1" fill="#7a7a7a"/><rect x="669" y="178" width="1" height="1" fill="#7a7a7a"/><rect x="676" y="178" width="1" height="1" fill="#7a7a7a"/><rect x="684" y="178" width="1" height="1" fill="#7a7a7a"/><rect x="691" y="174" width="1" height="5" fill="#7a7a7a"/><text x="691.50" y="172.7" font-size="9" fill="#8a8a8a" text-anchor="middle" >140</text><rect x="699" y="178" width="1" height="1" fill="#7a7a7a"/><rect x="706" y="178" width="1" height="1" fill="#7a7a7a"/><rect x="714" y="178" width="1" height="1" fill="#7a7a7a"/><rect x="721" y="178" width="1" height="1" fill="#7a7a7a"/><rect x="729" y="177" width="1" height="2" fill="#7a7a7a"/><rect x="737" y="178" width="1" height="1" fill="#7a7a7a"/><rect x="744" y="178" width="1" height="1" fill="#7a7a7a"/><rect x="752" y="178" width="1" height="1" fill="#7a7a7a"/><rect x="759" y="178" width="1" height="1" fill="#7a7a7a"/><rect x="767" y="174" width="1" height="5" fill="#7a7a7a"/><text x="767.50" y="172.7" font-size="9" fill="#8a8a8a" text-anchor="middle" >160</text><rect x="774" y="178" width="1" height="1" fill="#7a7a7a"/><rect x="782" y="178" width="1" height="1" fill="#7a7a7a"/><rect x="789" y="178" width="1" height="1" fill="#7a7a7a"/><rect x="797" y="178" width="1" height="1" fill="#7a7a7a"/><rect x="805" y="177" width="1" height="2" fill="#7a7a7a"/><rect x="812" y="178" width="1" height="1" fill="#7a7a7a"/><rect x="820" y="178" width="1" height="1" fill="#7a7a7a"/><rect x="827" y="178" width="1" height="1" fill="#7a7a7a"/><rect x="835" y="178" width="1" height="1" fill="#7a7a7a"/><rect x="842" y="174" width="1" height="5" fill="#7a7a7a"/><text x="842.50" y="172.7" font-size="9" fill="#8a8a8a" text-anchor="middle" >180</text><rect x="850" y="178" width="1" height="1" fill="#7a7a7a"/><rect x="858" y="178" width="1" height="1" fill="#7a7a7a"/><rect x="865" y="178" width="1" height="1" fill="#7a7a7a"/><rect x="873" y="178" width="1" height="1" fill="#7a7a7a"/><rect x="880" y="177" width="1" height="2" fill="#7a7a7a"/><rect x="888" y="178" width="1" height="1" fill="#7a7a7a"/><rect x="895" y="178" width="1" height="1" fill="#7a7a7a"/><rect x="903" y="178" width="1" height="1" fill="#7a7a7a"/><rect x="910" y="178" width="1" height="1" fill="#7a7a7a"/><rect x="918" y="174" width="1" height="5" fill="#7a7a7a"/><text x="918.50" y="172.7" font-size="9" fill="#8a8a8a" text-anchor="middle" >200</text><rect x="926" y="178" width="1" height="1" fill="#7a7a7a"/><rect x="933" y="178" width="1" height="1" fill="#7a7a7a"/><rect x="941" y="178" width="1" height="1" fill="#7a7a7a"/><rect x="948" y="178" width="1" height="1" fill="#7a7a7a"/><rect x="956" y="177" width="1" height="2" fill="#7a7a7a"/><rect x="963" y="178" width="1" height="1" fill="#7a7a7a"/><rect x="971" y="178" width="1" height="1" fill="#7a7a7a"/><rect x="978" y="178" width="1" height="1" fill="#7a7a7a"/><rect x="986" y="178" width="1" height="1" fill="#7a7a7a"/><rect x="994" y="174" width="1" height="5" fill="#7a7a7a"/><text x="994.50" y="172.7" font-size="9" fill="#8a8a8a" text-anchor="middle" >220</text><rect x="1001" y="178" width="1" height="1" fill="#7a7a7a"/><rect x="1009" y="178" width="1" height="1" fill="#7a7a7a"/><rect x="1016" y="178" width="1" height="1" fill="#7a7a7a"/><rect x="1024" y="178" width="1" height="1" fill="#7a7a7a"/><rect x="1031" y="177" width="1" height="2" fill="#7a7a7a"/><rect x="1039" y="178" width="1" height="1" fill="#7a7a7a"/><rect x="1047" y="178" width="1" height="1" fill="#7a7a7a"/><rect x="1054" y="178" width="1" height="1" fill="#7a7a7a"/><rect x="1062" y="178" width="1" height="1" fill="#7a7a7a"/><rect x="1069" y="174" width="1" height="5" fill="#7a7a7a"/><text x="1069.50" y="172.7" font-size="9" fill="#8a8a8a" text-anchor="middle" >240</text><rect x="1077" y="178" width="1" height="1" fill="#7a7a7a"/><rect x="1084" y="178" width="1" height="1" fill="#7a7a7a"/><rect x="1092" y="178" width="1" height="1" fill="#7a7a7a"/><rect x="1099" y="178" width="1" height="1" fill="#7a7a7a"/><rect x="1107" y="177" width="1" height="2" fill="#7a7a7a"/><rect x="1115" y="178" width="1" height="1" fill="#7a7a7a"/><rect x="1122" y="178" width="1" height="1" fill="#7a7a7a"/><rect x="1130" y="178" width="1" height="1" fill="#7a7a7a"/><rect x="1137" y="178" width="1" height="1" fill="#7a7a7a"/><rect x="1145" y="174" width="1" height="5" fill="#7a7a7a"/><text x="1145.50" y="172.7" font-size="9" fill="#8a8a8a" text-anchor="middle" >260</text><rect x="1152" y="178" width="1" height="1" fill="#7a7a7a"/><rect x="1160" y="178" width="1" height="1" fill="#7a7a7a"/><rect x="1167" y="178" width="1" height="1" fill="#7a7a7a"/><rect x="1175" y="178" width="1" height="1" fill="#7a7a7a"/><rect x="1183" y="177" width="1" height="2" fill="#7a7a7a"/><rect x="1190" y="178" width="1" height="1" fill="#7a7a7a"/><rect x="1198" y="178" width="1" height="1" fill="#7a7a7a"/><rect x="1205" y="178" width="1" height="1" fill="#7a7a7a"/><rect x="1213" y="178" width="1" height="1" fill="#7a7a7a"/><rect x="1220" y="174" width="1" height="5" fill="#7a7a7a"/><rect x="1228" y="178" width="1" height="1" fill="#7a7a7a"/><text x="1208.6" y="172.7" font-size="9" fill="#8a8a8a" text-anchor="start" >millimeters</text><path d="M940.5,163 V180" stroke="#000" stroke-width="1" stroke-dasharray="2,2"/><rect x="47" y="185" width="5" height="1" fill="#7a7a7a"/><rect x="51" y="193" width="1" height="1" fill="#7a7a7a"/><rect x="51" y="200" width="1" height="1" fill="#7a7a7a"/><rect x="51" y="208" width="1" height="1" fill="#7a7a7a"/><rect x="51" y="216" width="1" height="1" fill="#7a7a7a"/><rect x="50" y="223" width="2" height="1" fill="#7a7a7a"/><rect x="51" y="231" width="1" height="1" fill="#7a7a7a"/><rect x="51" y="238" width="1" height="1" fill="#7a7a7a"/><rect x="51" y="246" width="1" height="1" fill="#7a7a7a"/><rect x="51" y="253" width="1" height="1" fill="#7a7a7a"/><rect x="47" y="261" width="5" height="1" fill="#7a7a7a"/><rect x="51" y="268" width="1" height="1" fill="#7a7a7a"/><rect x="51" y="276" width="1" height="1" fill="#7a7a7a"/><rect x="51" y="284" width="1" height="1" fill="#7a7a7a"/><rect x="51" y="291" width="1" height="1" fill="#7a7a7a"/><rect x="50" y="299" width="2" height="1" fill="#7a7a7a"/><rect x="51" y="306" width="1" height="1" fill="#7a7a7a"/><rect x="51" y="314" width="1" height="1" fill="#7a7a7a"/><rect x="51" y="321" width="1" height="1" fill="#7a7a7a"/><rect x="51" y="329" width="1" height="1" fill="#7a7a7a"/><rect x="47" y="336" width="5" height="1" fill="#7a7a7a"/><rect x="51" y="344" width="1" height="1" fill="#7a7a7a"/><rect x="51" y="351" width="1" height="1" fill="#7a7a7a"/><rect x="51" y="359" width="1" height="1" fill="#7a7a7a"/><rect x="51" y="367" width="1" height="1" fill="#7a7a7a"/><rect x="50" y="374" width="2" height="1" fill="#7a7a7a"/><rect x="51" y="382" width="1" height="1" fill="#7a7a7a"/><rect x="51" y="389" width="1" height="1" fill="#7a7a7a"/><rect x="51" y="397" width="1" height="1" fill="#7a7a7a"/><rect x="51" y="404" width="1" height="1" fill="#7a7a7a"/><rect x="47" y="412" width="5" height="1" fill="#7a7a7a"/><rect x="51" y="419" width="1" height="1" fill="#7a7a7a"/><rect x="51" y="427" width="1" height="1" fill="#7a7a7a"/><rect x="51" y="434" width="1" height="1" fill="#7a7a7a"/><rect x="51" y="442" width="1" height="1" fill="#7a7a7a"/><rect x="50" y="450" width="2" height="1" fill="#7a7a7a"/><rect x="51" y="457" width="1" height="1" fill="#7a7a7a"/><rect x="51" y="465" width="1" height="1" fill="#7a7a7a"/><rect x="51" y="472" width="1" height="1" fill="#7a7a7a"/><rect x="51" y="480" width="1" height="1" fill="#7a7a7a"/><rect x="47" y="487" width="5" height="1" fill="#7a7a7a"/><rect x="51" y="495" width="1" height="1" fill="#7a7a7a"/><rect x="51" y="502" width="1" height="1" fill="#7a7a7a"/><rect x="51" y="510" width="1" height="1" fill="#7a7a7a"/><rect x="51" y="518" width="1" height="1" fill="#7a7a7a"/><rect x="50" y="525" width="2" height="1" fill="#7a7a7a"/><rect x="51" y="533" width="1" height="1" fill="#7a7a7a"/><rect x="51" y="540" width="1" height="1" fill="#7a7a7a"/><rect x="51" y="548" width="1" height="1" fill="#7a7a7a"/><rect x="51" y="555" width="1" height="1" fill="#7a7a7a"/><rect x="47" y="563" width="5" height="1" fill="#7a7a7a"/><rect x="51" y="570" width="1" height="1" fill="#7a7a7a"/><rect x="51" y="578" width="1" height="1" fill="#7a7a7a"/><rect x="51" y="585" width="1" height="1" fill="#7a7a7a"/><rect x="51" y="593" width="1" height="1" fill="#7a7a7a"/><rect x="50" y="601" width="2" height="1" fill="#7a7a7a"/><rect x="51" y="608" width="1" height="1" fill="#7a7a7a"/><rect x="51" y="616" width="1" height="1" fill="#7a7a7a"/><rect x="51" y="623" width="1" height="1" fill="#7a7a7a"/><rect x="51" y="631" width="1" height="1" fill="#7a7a7a"/><rect x="47" y="638" width="5" height="1" fill="#7a7a7a"/><rect x="51" y="646" width="1" height="1" fill="#7a7a7a"/><rect x="51" y="653" width="1" height="1" fill="#7a7a7a"/><rect x="51" y="661" width="1" height="1" fill="#7a7a7a"/><rect x="51" y="668" width="1" height="1" fill="#7a7a7a"/><rect x="50" y="676" width="2" height="1" fill="#7a7a7a"/><rect x="51" y="684" width="1" height="1" fill="#7a7a7a"/><rect x="51" y="691" width="1" height="1" fill="#7a7a7a"/><rect x="51" y="699" width="1" height="1" fill="#7a7a7a"/><rect x="51" y="706" width="1" height="1" fill="#7a7a7a"/><rect x="47" y="714" width="5" height="1" fill="#7a7a7a"/><rect x="51" y="721" width="1" height="1" fill="#7a7a7a"/><rect x="51" y="729" width="1" height="1" fill="#7a7a7a"/><rect x="51" y="736" width="1" height="1" fill="#7a7a7a"/><rect x="51" y="744" width="1" height="1" fill="#7a7a7a"/><defs><clipPath id="vr"><rect x="36" y="181" width="17" height="573"/></clipPath></defs><g clip-path="url(#vr)"><text transform="translate(47.2,183.50) rotate(-90)" font-size="9" fill="#8a8a8a" text-anchor="middle">640</text><text transform="translate(47.2,259.50) rotate(-90)" font-size="9" fill="#8a8a8a" text-anchor="middle">620</text><text transform="translate(47.2,334.50) rotate(-90)" font-size="9" fill="#8a8a8a" text-anchor="middle">600</text><text transform="translate(47.2,410.50) rotate(-90)" font-size="9" fill="#8a8a8a" text-anchor="middle">580</text><text transform="translate(47.2,485.50) rotate(-90)" font-size="9" fill="#8a8a8a" text-anchor="middle">560</text><text transform="translate(47.2,561.50) rotate(-90)" font-size="9" fill="#8a8a8a" text-anchor="middle">540</text><text transform="translate(47.2,636.50) rotate(-90)" font-size="9" fill="#8a8a8a" text-anchor="middle">520</text><text transform="translate(47.2,712.50) rotate(-90)" font-size="9" fill="#8a8a8a" text-anchor="middle">500</text></g><path d="M42,167h1v1h-1z M42,172h1v1h-1z M42,174h1v1h-1z M42,176h1v1h-1z M40,169h1v1h-1z M45,169h1v1h-1z M47,169h1v1h-1z M49,169h1v1h-1z" fill="#8a8a8a"/><path d="M42.5,169.5 L48,175" stroke="#555" stroke-width="1.1"/><rect x="47" y="174" width="2" height="2" fill="#555"/><rect x="42" y="169" width="1.5" height="1.5" fill="#999"/><path d="M13.5,148 L13.5,163.5 L16.5,160.5 L19.5,166.5 L22,165.2 L19,159.5 L23.5,159.5 Z" fill="#222"/><path d="M31.0,170.0 L31.0,164.0 L25.0,170.0 Z" fill="#111"/><path d="M14,180.2 L12.8,185" fill="none" stroke="#222" stroke-width="1.3"/><path d="M12.3,189.8 Q12.8,195.5 15.7,199.5" fill="none" stroke="#222" stroke-width="1.3"/><rect x="10.8" y="185.5" width="4.4" height="4" fill="#fff" stroke="#222" stroke-width="1.4"/><path d="M19.3,191.2 L27.5,195.3 L23.3,199.6 Z" fill="#222"/><path d="M31.0,202.8 L31.0,196.8 L25.0,202.8 Z" fill="#111"/><path d="M15.2,212.5 V227.3 H28.5 M7.8,219.3 H21.7 V233" fill="none" stroke="#222" stroke-width="2.5"/><path d="M31.0,235.5 L31.0,229.5 L25.0,235.5 Z" fill="#111"/><circle cx="16.5" cy="254.5" r="6.2" fill="none" stroke="#222" stroke-width="1.5"/><path d="M21,259 L27,265" stroke="#222" stroke-width="2.6"/><path d="M31.0,268.5 L31.0,262.5 L25.0,268.5 Z" fill="#111"/><path d="M12.5,279 V288 M8,283.5 H17" stroke="#222" stroke-width="1.2"/><path d="M13,290.5 V298 Q13,299.5 14,298.5 Q15,293 16.5,296 Q17.5,299 19,296 Q20.5,293 21.5,296 Q22.5,299 24,296 Q25,294 27.5,295.5" fill="none" stroke="#222" stroke-width="1.3"/><path d="M31.0,302.0 L31.0,296.0 L25.0,302.0 Z" fill="#111"/><path d="M18.3,312.3 L24.8,318.8 L18.3,325.3 L11.8,318.8 Z" fill="#fff" stroke="#222" stroke-width="1.7"/><path d="M18.3,312.3 L24.8,318.8 L22,321.6" fill="none" stroke="#222" stroke-width="2.4"/><path d="M15.8,319.5 H20.3 L18,322 Z" fill="#e07020"/><path d="M25,321.5 Q26.2,323.5 25,325 Q23.8,323.5 25,321.5 Z" fill="#e07020"/><rect x="8.5" y="327.3" width="19" height="4.2" fill="#fff" stroke="#222" stroke-width="1.1"/><rect x="18.3" y="327.8" width="8.7" height="3.2" fill="#e07020"/><rect x="9" y="345.8" width="18.4" height="18" fill="none" stroke="#222" stroke-width="1.6"/><path d="M31.0,367.5 L31.0,361.5 L25.0,367.5 Z" fill="#111"/><circle cx="18" cy="388" r="9.6" fill="none" stroke="#222" stroke-width="1.6"/><path d="M31.0,400.5 L31.0,394.5 L25.0,400.5 Z" fill="#111"/><path d="M13.5,412 H22.5 L27,421 L22.5,430 H13.5 L9,421 Z" fill="none" stroke="#222" stroke-width="1.6"/><path d="M31.0,433.5 L31.0,427.5 L25.0,433.5 Z" fill="#111"/><path d="M9.3,464.8 L17.6,438.8 L18.8,438.8 L27.2,464.8 M12.3,455.5 H24.2" fill="none" stroke="#222" stroke-width="2.5"/><path d="M31.0,467.5 L31.0,461.5 L25.0,467.5 Z" fill="#111"/><path d="M27.8,485.3 H19.2 L10,494.5" fill="none" stroke="#222" stroke-width="2.6"/><path d="M7.8,489.2 L7.8,497.2 L15.5,497.2 Z" fill="#222"/><path d="M31.0,500.0 L31.0,494.0 L25.0,500.0 Z" fill="#111"/><path d="M11,513 L25,527" stroke="#222" stroke-width="1.3"/><rect x="8.6" y="510.6" width="5.2" height="5" fill="#e07020" stroke="#3a2010" stroke-width="0.9"/><rect x="22.5" y="524.4" width="5.2" height="5" fill="#e07020" stroke="#3a2010" stroke-width="0.9"/><path d="M31.0,533.5 L31.0,527.5 L25.0,533.5 Z" fill="#111"/><path d="M13.2,562.2 H27.2 V548" fill="none" stroke="#222" stroke-width="2.6"/><rect x="8.7" y="543.7" width="15" height="14.6" fill="#f6f6f6" stroke="#222" stroke-width="1.5"/><path d="M31.0,566.0 L31.0,560.0 L25.0,566.0 Z" fill="#111"/><rect x="8.2" y="576" width="19.6" height="20" fill="#222"/><path d="M9.20,580.00h2.95v3h-2.95zM9.20,586.00h2.95v3h-2.95zM9.20,592.00h2.95v3h-2.95zM12.15,577.00h2.95v3h-2.95zM12.15,583.00h2.95v3h-2.95zM12.15,589.00h2.95v3h-2.95zM15.10,580.00h2.95v3h-2.95zM15.10,586.00h2.95v3h-2.95zM15.10,592.00h2.95v3h-2.95zM18.05,577.00h2.95v3h-2.95zM18.05,583.00h2.95v3h-2.95zM18.05,589.00h2.95v3h-2.95zM21.00,580.00h2.95v3h-2.95zM21.00,586.00h2.95v3h-2.95zM21.00,592.00h2.95v3h-2.95zM23.95,577.00h2.95v3h-2.95zM23.95,583.00h2.95v3h-2.95zM23.95,589.00h2.95v3h-2.95z" fill="#fff"/><path d="M9.5,628.8 L20.5,617.8" stroke="#222" stroke-width="3.2" stroke-linecap="round"/><path d="M9.9,628.4 L20.1,618.2" stroke="#fff" stroke-width="1.2"/><path d="M10,628.3 L15.5,622.8" stroke="#e07020" stroke-width="1.6"/><path d="M18.5,615.5 L23.5,620.5" stroke="#222" stroke-width="2.2"/><path d="M21,614.5 L24.3,611.2 Q25,610.5 25.7,611.2 L27.8,613.3 Q28.5,614 27.8,614.7 L24.5,618 Z" fill="#222"/><path d="M31.0,632.5 L31.0,626.5 L25.0,632.5 Z" fill="#111"/><path d="M18,643.5 L26.5,652 L18,660.5 L9.5,652 Z" fill="#fff" stroke="#222" stroke-width="1.8"/><path d="M18,643.5 L26.5,652 L22,656.5" fill="none" stroke="#222" stroke-width="2.6"/><path d="M14,652.5 H22 L18,656 Z" fill="#dd1a1a"/><path d="M24,660.5 L28,656 L28,663 Z" fill="#dd1a1a"/><path d="M31.0,665.5 L31.0,659.5 L25.0,665.5 Z" fill="#111"/><path d="M17.5,674.5 L21.5,683 L19.5,686.5 H15.5 L13.5,683 Z" fill="none" stroke="#222" stroke-width="1.4"/><path d="M17.5,675 V681" stroke="#222" stroke-width="1"/><circle cx="17.5" cy="682" r="1" fill="#222"/><rect x="15" y="688" width="5" height="5.5" fill="none" stroke="#222" stroke-width="1.3"/><path d="M31.0,697.5 L31.0,691.5 L25.0,697.5 Z" fill="#111"/><rect x="13.5" y="708" width="14" height="13" fill="#fff" stroke="#222" stroke-width="1.3"/><rect x="13" y="707.5" width="15" height="3" fill="#222"/><path d="M18,713 H26 M18,716.5 H26 M18,720 H26 M15,713 H16.5 M15,716.5 H16.5" stroke="#222" stroke-width="1.2"/><path d="M14,718.5 L19,723.5 L14,728.5 L9,723.5 Z" fill="#fff" stroke="#222" stroke-width="1.5"/><path d="M12.5,723.5 H15.5 L14,725 Z" fill="#e07020"/><circle cx="20.5" cy="727" r="0.8" fill="#e07020"/><rect x="4" y="738" width="28" height="1" fill="#d6d6d6"/></svg>
</body></html>
